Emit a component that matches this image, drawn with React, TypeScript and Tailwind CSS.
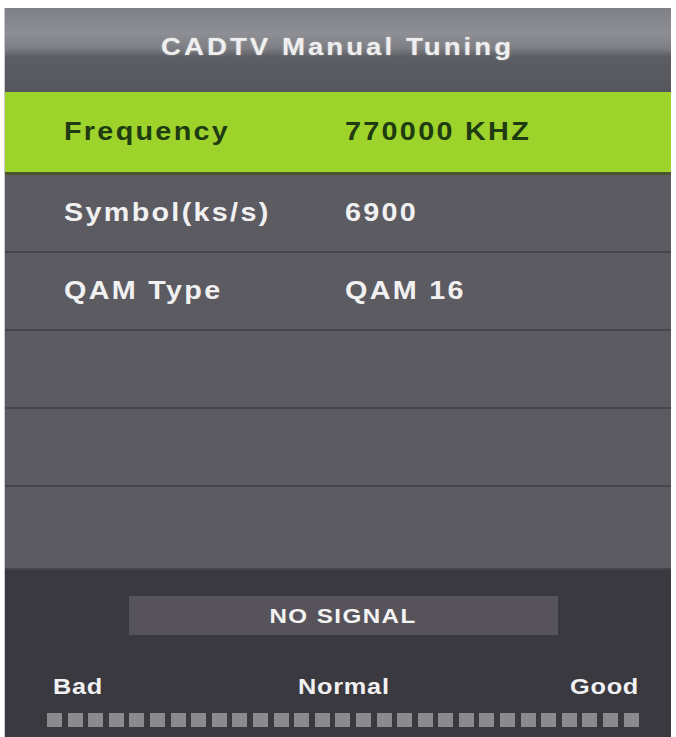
const rows = [
  { label: "Frequency", value: "770000 KHZ", active: true },
  { label: "Symbol(ks/s)", value: "6900" },
  { label: "QAM Type", value: "QAM 16" },
  { label: "", value: "" },
  { label: "", value: "" },
  { label: "", value: "" },
];

const bars = Array.from({ length: 29 });

// the OSD is shown stretched wide, so text gets a horizontal scale
const wide = "inline-block origin-left scale-x-[1.15] whitespace-nowrap";

export default function App() {
  return (
    <div className="min-h-screen bg-white pt-[8px] pl-[4px] pr-[5px] font-['Liberation_Sans',Arial,sans-serif]">
      <div className="flex h-[729px] flex-col overflow-hidden border-l border-[#c9c9cc] bg-[#5c5b62]">
        {/* Title bar */}
        <div className="flex h-[84px] shrink-0 items-center justify-center bg-[linear-gradient(to_bottom,#7f8085_0%,#8e8f94_30%,#7d7e83_48%,#5d5e63_58%,#55565b_100%)] pb-[6px]">
          <h1 className="inline-block scale-x-[1.15] text-[24px] font-bold tracking-[0.11em] text-[#efefef] [text-shadow:0_0_2px_rgba(255,255,255,0.35)]">
            CADTV Manual Tuning
          </h1>
        </div>

        {/* Menu rows */}
        {rows.map((row, i) =>
          row.active ? (
            <div
              key={i}
              className="flex h-[83px] shrink-0 items-center border-b-[3px] border-[#4b5530] bg-[#9dd32a] pl-[59px] text-[25px] font-bold tracking-[0.08em] text-[#1f3b12]"
            >
              <span className="w-[281px]">
                <span className={wide}>{row.label}</span>
              </span>
              <span className={wide}>{row.value}</span>
            </div>
          ) : (
            <div
              key={i}
              className={`flex shrink-0 items-center border-b-2 border-[#45454b] bg-[#5c5b62] pl-[59px] text-[25px] font-bold tracking-[0.08em] text-[#f1f1f1] ${
                i === rows.length - 1 ? "h-[83px]" : "h-[78px]"
              }`}
            >
              <span className="w-[281px]">
                <span className={wide}>{row.label}</span>
              </span>
              <span className={wide}>{row.value}</span>
            </div>
          )
        )}

        {/* Signal panel */}
        <div className="flex flex-1 flex-col bg-[#3a393f] pl-[42px] pr-[32px] pt-[26px]">
          <div className="mx-auto flex h-[39px] w-[429px] items-center justify-center bg-[#57535a] text-[21px] font-bold tracking-[0.06em] text-[#f3f3f3]">
            <span className="inline-block scale-x-[1.15]">NO SIGNAL</span>
          </div>
          <div className="mt-[38px] flex items-center justify-between pl-[6px] text-[22px] font-bold leading-[28px] tracking-[0.03em] text-[#f1f1f1]">
            <span className={wide}>Bad</span>
            <span className={wide}>Normal</span>
            <span className="inline-block origin-right scale-x-[1.15]">Good</span>
          </div>
          <div className="mt-[12px] flex justify-between">
            {bars.map((_, i) => (
              <div key={i} className="h-[14px] w-[15px] bg-[#8a8a8f]" />
            ))}
          </div>
        </div>
      </div>
    </div>
  );
}
